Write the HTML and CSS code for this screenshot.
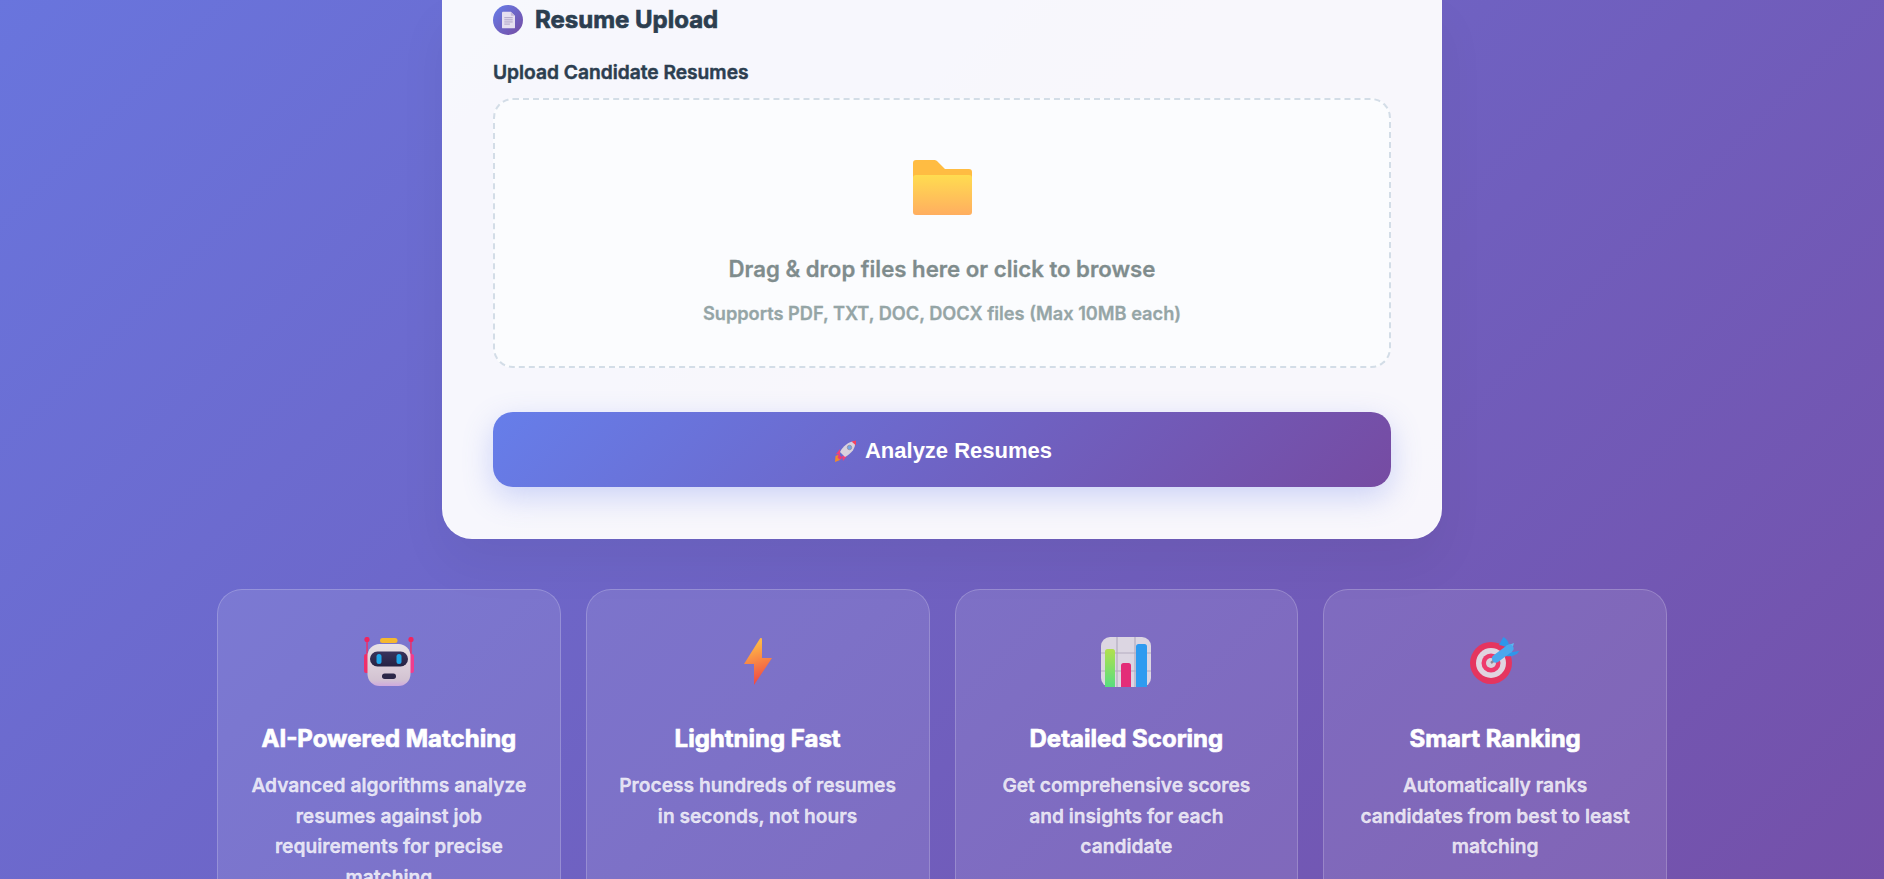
FILE: index.html
```html
<!DOCTYPE html>
<html lang="en">
<head>
  <meta charset="UTF-8">
  <meta name="viewport" content="width=device-width, initial-scale=1">
  <title>Resume Matcher</title>
  <link rel="stylesheet" href="styles.css">
</head>
<body>
  <div class="page">
    <div class="upload-card">
      <h2 class="section-title">
        <span class="section-icon">
          <svg width="13" height="18" viewBox="0 0 14 18">
            <path d="M1 0h8.500L14 4.500V17a1 1 0 0 1-1 1H1a1 1 0 0 1-1-1V1a1 1 0 0 1 1-1z" fill="#e6dff0"/>
            <path d="M9.500 0L14 4.500H10.500a1 1 0 0 1-1-1z" fill="#c4b8d8"/>
            <path d="M2.500 6.500h9M2.500 8.800h9M2.500 11.100h9M2.500 13.400h6" stroke="#ab9fc4" stroke-width="1"/>
          </svg>
        </span>
        Resume Upload
      </h2>
      <label class="field-label">Upload Candidate Resumes</label>
      <div class="dropzone">
        <svg class="folder" width="59" height="55" viewBox="0 0 59 55">
          <defs>
            <linearGradient id="folderFront" x1="0" y1="0" x2="0" y2="1">
              <stop offset="0" stop-color="#ffdc50"/>
              <stop offset="1" stop-color="#ffae60"/>
            </linearGradient>
          </defs>
          <path d="M3 0h18c1.500 0 2.500.5 3.500 1.500L32 9h24a3 3 0 0 1 3 3v10H0V3a3 3 0 0 1 3-3z" fill="#ffbc42"/>
          <rect x="0" y="15" width="59" height="40" rx="3" fill="url(#folderFront)"/>
        </svg>
        <p class="drop-text">Drag &amp; drop files here or click to browse</p>
        <p class="drop-hint">Supports PDF, TXT, DOC, DOCX files (Max 10MB each)</p>
      </div>
      <button class="analyze-button">
        <svg width="22" height="22" viewBox="0 0 22 22">
          <path d="M3 15l-2.500 1L0 22l5-2 1-2z" fill="#f08a2c"/>
          <path d="M5 9L1 14l4 1zM12 16l-4 5-1-5z" fill="#f0417a"/>
          <path d="M5 12C8 6 13 2 20 1c1 7-3 12-10 16z" fill="#d9d2de"/>
          <path d="M16.500 1.500L21 0.500 21 5.500z" fill="#f4405f"/>
          <circle cx="14.500" cy="7.500" r="2.200" fill="#6fa8e8" stroke="#9a93ad" stroke-width="1"/>
          <path d="M4 14.500l3.500 3.500-3 1.500-2-2z" fill="#f03a78"/>
        </svg>
        Analyze Resumes
      </button>
    </div>

    <div class="features">
      <div class="feature-card">
        <svg class="feature-icon" width="50" height="50" viewBox="0 0 50 50">
          <defs>
            <linearGradient id="botFace" x1="0" y1="0" x2="0" y2="1">
              <stop offset="0" stop-color="#e9e2e6"/>
              <stop offset=".85" stop-color="#d3c3d2"/>
              <stop offset="1" stop-color="#cfa9de"/>
            </linearGradient>
            <linearGradient id="botVisor" x1="0" y1="0" x2="0" y2="1">
              <stop offset="0" stop-color="#38335c"/>
              <stop offset="1" stop-color="#262344"/>
            </linearGradient>
          </defs>
          <rect x="16" y="1" width="17.500" height="5" rx="2.500" fill="#f5b82e"/>
          <rect x="2.300" y="2" width="1.500" height="20" fill="#ee2f6b"/>
          <rect x="46.200" y="2" width="1.500" height="20" fill="#ee2f6b"/>
          <circle cx="3" cy="2.500" r="2.600" fill="#f0245f"/>
          <circle cx="47" cy="2.500" r="2.600" fill="#f0245f"/>
          <rect x="0" y="17" width="6" height="19" rx="2" fill="#ee2f6b"/>
          <rect x="44" y="17" width="6" height="19" rx="2" fill="#f03d8f"/>
          <rect x="3.500" y="7" width="43" height="42" rx="12" fill="url(#botFace)"/>
          <rect x="6" y="14.500" width="38" height="15" rx="7.500" fill="url(#botVisor)"/>
          <rect x="12.500" y="17" width="5" height="10" rx="2.500" fill="#1fa5e8"/>
          <rect x="32.500" y="17" width="5" height="10" rx="2.500" fill="#1fa5e8"/>
          <rect x="18" y="36.500" width="14" height="5.500" rx="2.700" fill="#2b2748"/>
        </svg>
        <h3 class="feature-title">AI-Powered Matching</h3>
        <p class="feature-text">Advanced algorithms analyze resumes against job requirements for precise matching</p>
      </div>
      <div class="feature-card">
        <svg class="feature-icon" width="50" height="50" viewBox="0 0 50 50">
          <defs>
            <linearGradient id="bolt" x1="0" y1="0" x2=".2" y2="1">
              <stop offset=".2" stop-color="#ffb545"/>
              <stop offset="1" stop-color="#ef4b45"/>
            </linearGradient>
          </defs>
          <path d="M27 1.500c.8-.8 2-.6 2 1V21h10L21 48V27H11z" fill="url(#bolt)"/>
        </svg>
        <h3 class="feature-title">Lightning Fast</h3>
        <p class="feature-text">Process hundreds of resumes in seconds, not hours</p>
      </div>
      <div class="feature-card">
        <svg class="feature-icon" width="50" height="50" viewBox="0 0 50 50">
          <defs>
            <linearGradient id="barGreen" x1="0" y1="0" x2="0" y2="1">
              <stop offset="0" stop-color="#b2e04e"/>
              <stop offset="1" stop-color="#58dd80"/>
            </linearGradient>
          </defs>
          <rect width="50" height="50" rx="9" fill="#dcd6e2"/>
          <path d="M16 0v50M34 0v50M0 16h50M0 34h50" stroke="#b4acc0" stroke-width="1.200"/>
          <path d="M4 14.500A2.500 2.500 0 0 1 6.500 12h5a2.500 2.500 0 0 1 2.500 2.500V50H4z" fill="url(#barGreen)"/>
          <path d="M20 28.500a2.500 2.500 0 0 1 2.500-2.500h5a2.500 2.500 0 0 1 2.500 2.500V50H20z" fill="#e32d78"/>
          <path d="M35 9.500A2.500 2.500 0 0 1 37.500 7h6A2.500 2.500 0 0 1 46 9.500V50H35z" fill="#2e9bf0"/>
        </svg>
        <h3 class="feature-title">Detailed Scoring</h3>
        <p class="feature-text">Get comprehensive scores and insights for each candidate</p>
      </div>
      <div class="feature-card">
        <svg class="feature-icon" width="50" height="50" viewBox="0 0 50 50">
          <circle cx="21" cy="26" r="21" fill="#e5355f"/>
          <circle cx="21" cy="26" r="15" fill="#e0d4e0"/>
          <circle cx="21" cy="26" r="9.500" fill="#ee3a6c"/>
          <circle cx="21" cy="26" r="5" fill="#d8d2dc"/>
          <path d="M21 26l6-5" stroke="#8e8796" stroke-width="2.400"/>
          <path d="M29 8L33.300 0C37 2 39 5 39 10z" fill="#2e97ea"/>
          <path d="M36 16L49.300 14C47 18 42 20 36 19z" fill="#2e97ea"/>
          <path d="M36 9L44 6 41 16z" fill="#5cb8f2"/>
          <path d="M26 21.500L39.500 11.500" stroke="#4aa8ee" stroke-width="8" stroke-linecap="round"/>
        </svg>
        <h3 class="feature-title">Smart Ranking</h3>
        <p class="feature-text">Automatically ranks candidates from best to least matching</p>
      </div>
    </div>
  </div>
</body>
</html>
```
FILE: styles.css
```css
* {
  box-sizing: border-box;
}
html, body {
  height: 100%;
}
body {
  margin: 0;
  overflow: hidden;
  font-family: Inter, "Noto Sans", sans-serif;
  /* gradient runs over the whole long page, this is the scrolled part of it */
  background: linear-gradient(135deg, #667eea 0%, #764ba2 100%) no-repeat 0 -690px / 100% 1950px;
  color: #2c3e50;
}
.page {
  display: flex;
  flex-direction: column;
  align-items: center;
}
.upload-card {
  width: 1000px;
  padding: 5px 50px 51px;
  background: rgba(255, 255, 255, 0.95);
  border: 1px solid rgba(255, 255, 255, 0.2);
  border-top: none;
  border-radius: 0 0 30px 30px;
  box-shadow: 0 25px 50px rgba(0, 0, 0, 0.05);
}
.section-title {
  display: flex;
  align-items: center;
  gap: 12px;
  margin: 0 0 26px;
  font-size: 24px;
  font-weight: 700;
  line-height: 30px;
  -webkit-text-stroke: 0.7px currentColor;
}
.section-icon {
  display: flex;
  align-items: center;
  justify-content: center;
  width: 30px;
  height: 30px;
  border-radius: 50%;
  background: linear-gradient(135deg, #667eea, #764ba2);
}
.field-label {
  display: block;
  margin-bottom: 14px;
  font-size: 19.200px;
  font-weight: 600;
  line-height: 23px;
  -webkit-text-stroke: 0.5px currentColor;
}
.dropzone {
  display: flex;
  flex-direction: column;
  align-items: center;
  height: 270px;
  padding-top: 60px;
  background: #fbfcfe;
  border: 2px dashed #d3dde7;
  border-radius: 20px;
}
.folder {
  margin-bottom: 40px;
}
.drop-text {
  margin: 0 0 21px;
  font-size: 22.200px;
  font-weight: 600;
  line-height: 27px;
  color: #7f8c8d;
  -webkit-text-stroke: 0.3px currentColor;
}
.drop-hint {
  margin: 0;
  font-size: 18.200px;
  font-weight: 600;
  line-height: 21px;
  color: #95a5a6;
  -webkit-text-stroke: 0.3px currentColor;
}
.analyze-button {
  display: flex;
  align-items: center;
  justify-content: center;
  gap: 8px;
  width: 100%;
  height: 75px;
  margin-top: 44px;
  padding: 2px 0 0 3px;
  border: none;
  border-radius: 20px;
  background: linear-gradient(135deg, #667eea 0%, #764ba2 100%);
  box-shadow: 0 10px 30px rgba(102, 126, 234, 0.3);
  color: #fff;
  font-family: "Liberation Sans", Arial, sans-serif;
  font-size: 22px;
  font-weight: 700;
  cursor: pointer;
}
.features {
  display: grid;
  grid-template-columns: repeat(4, 1fr);
  gap: 25px;
  width: 1450px;
  margin-top: 50px;
}
.feature-card {
  height: 400px;
  padding: 47px 32px 0;
  text-align: center;
  background: rgba(255, 255, 255, 0.1);
  border: 1px solid rgba(255, 255, 255, 0.2);
  border-radius: 25px;
}
.feature-icon {
  display: block;
  margin: 0 auto 37px;
}
.feature-title {
  margin: 0 0 17px;
  font-size: 24px;
  font-weight: 700;
  line-height: 29px;
  color: #fff;
  -webkit-text-stroke: 0.7px currentColor;
}
.feature-text {
  margin: 0;
  font-size: 19.200px;
  font-weight: 600;
  line-height: 30.720px;
  color: rgba(255, 255, 255, 0.8);
  -webkit-text-stroke: 0.3px currentColor;
}
```
